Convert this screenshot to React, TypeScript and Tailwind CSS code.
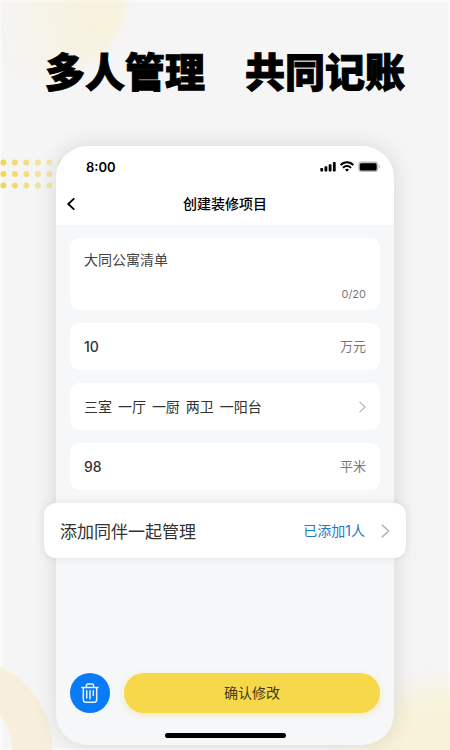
import { useState } from "react";

const ROOMS = ["三室", "一厅", "一厨", "两卫", "一阳台"];

export default function App() {
  return (
    <main className="relative isolate flex min-h-screen flex-col overflow-hidden bg-[#f5f5f5] px-14 pb-[5px] font-['Inter','Noto_Sans_CJK_SC',sans-serif] shadow-[inset_0_0_0_2px_#fafafa]">
      <Backdrop />
      <h1 className="-mx-10 py-[49px] text-center text-[40px] leading-[48px] font-black whitespace-pre text-black [-webkit-text-stroke:1px_black]">
        多人管理　共同记账
      </h1>
      <Phone />
    </main>
  );
}

function Phone() {
  return (
    <section className="flex flex-1 flex-col rounded-[32px] bg-[#f5f7f9] shadow-[0_0_24px_rgba(0,0,0,0.12)]">
      <header className="h-[79px] rounded-t-[32px] bg-white pt-3">
        <div className="flex items-center justify-between pr-[14px] pl-[30px] leading-[18px]">
          <span className="text-[13px] font-semibold text-black">8:00</span>
          <StatusIcons />
        </div>
        <div className="relative mt-[7px] flex h-[42px] items-center justify-center">
          <button type="button" aria-label="返回" className="absolute left-[10px] p-px text-black">
            <Chevron className="h-3 w-2 -scale-x-100" width={2} />
          </button>
          <h2 className="text-sm font-medium text-black">创建装修项目</h2>
        </div>
      </header>
      <ProjectForm />
    </section>
  );
}

function ProjectForm() {
  const [name, setName] = useState("大同公寓清单");

  return (
    <form className="flex flex-1 flex-col px-[14px] pt-[13px] pb-[7px]" onSubmit={(e) => e.preventDefault()}>
      <div className="flex flex-col gap-[13px]">
        <div className="rounded-[9px] bg-white px-[14px] pt-3 pb-2">
          <textarea
            aria-label="项目名称"
            value={name}
            onChange={(e) => setName(e.target.value)}
            className="block h-9 w-full resize-none text-sm leading-5 text-[#444] outline-none"
          />
          <p className="text-right text-[11px] leading-4 text-[#777]">0/20</p>
        </div>

        <NumberField label="预算" value="10" unit="万元" />

        <button type="button" className="flex h-[47px] items-center justify-between rounded-[9px] bg-white px-[14px] text-sm text-[#333]">
          <span>
            {ROOMS.map((room) => (
              <span key={room} className="mr-0.5">
                {room}{" "}
              </span>
            ))}
          </span>
          <Chevron className="h-3 w-[7px] text-[#b5b5b5]" width={1.3} />
        </button>

        <NumberField label="面积" value="98" unit="平米" />

        {/* Wider than the phone on both sides */}
        <button
          type="button"
          className="-mx-[26px] flex h-[55px] items-center rounded-xl bg-white px-4 leading-6 shadow-[0_0_10px_rgba(0,0,0,0.09)]"
        >
          <span className="font-['Noto_Sans_CJK_SC',sans-serif] text-[17px] text-[#333]">添加同伴一起管理</span>
          <span className="ml-auto text-sm leading-6 text-[#2079c7]">已添加1人</span>
          <Chevron className="ml-4 h-[14px] w-[9px] text-[#b5b5b5]" width={1.5} />
        </button>
      </div>

      <div className="mt-auto flex gap-[14px] pt-8">
        <button
          type="button"
          aria-label="删除"
          className="flex size-10 shrink-0 items-center justify-center rounded-full bg-[#0a7bf7] text-[#e4f3ff]"
        >
          <TrashIcon />
        </button>
        <button
          type="submit"
          className="h-10 flex-1 rounded-full bg-[#f7d84a] text-sm text-[#403a1c] shadow-[0_2px_6px_rgba(247,216,74,0.4)]"
        >
          确认修改
        </button>
      </div>
      <div className="mx-auto mt-5 h-[5px] w-[121px] rounded-full bg-black" />
    </form>
  );
}

function NumberField({ label, value, unit }: { label: string; value: string; unit: string }) {
  return (
    <label className="flex h-[47px] items-center rounded-[9px] bg-white px-[14px]">
      <input
        aria-label={label}
        defaultValue={value}
        inputMode="numeric"
        className="min-w-0 flex-1 text-sm font-medium text-[#333] outline-none"
      />
      <span className="text-[13px] text-[#777]">{unit}</span>
    </label>
  );
}

function Chevron({ className, width }: { className?: string; width: number }) {
  return (
    <svg className={className} viewBox="0 0 8 13" fill="none" aria-hidden>
      <path
        d="M1 1l6 5.5L1 12"
        stroke="currentColor"
        strokeWidth={width}
        strokeLinecap="round"
        strokeLinejoin="round"
      />
    </svg>
  );
}

function StatusIcons() {
  return (
    <svg width="60" height="12" viewBox="0 0 60 12" fill="none" aria-hidden>
      {/* Signal */}
      <g fill="#000">
        <rect x="0.3" y="7" width="2.8" height="3.6" rx="0.8" />
        <rect x="4.5" y="5.3" width="2.8" height="5.3" rx="0.8" />
        <rect x="8.7" y="3.2" width="2.8" height="7.4" rx="0.8" />
        <rect x="12.9" y="0.9" width="2.8" height="9.7" rx="0.8" />
      </g>
      {/* Wi-Fi */}
      <g stroke="#000" strokeWidth="2">
        <path d="M20.7 4.2a8.400 8.400 0 0 1 12.600 0" />
        <path d="M23 6.800a5.300 5.300 0 0 1 8 0" />
      </g>
      <path d="M25 8.600a3 3 0 0 1 4 0L27 10.800z" fill="#000" />
      {/* Battery */}
      <rect x="38.200" y="0.600" width="20" height="10.400" rx="3" fill="#bdbdbd" />
      <rect x="39.800" y="2.200" width="16.800" height="7.200" rx="1.500" fill="#000" />
      <path d="M58.700 4v3.600c.9-.3 1.300-1 1.300-1.800s-.4-1.500-1.300-1.800z" fill="#bdbdbd" />
    </svg>
  );
}

function TrashIcon() {
  return (
    <svg width="18" height="20" viewBox="0 0 18 20" fill="none" stroke="currentColor" aria-hidden>
      <path
        d="M.8 4.600h16.400M5.400 4.400V2.500q0-1.500 1.500-1.500h4.200q1.500 0 1.500 1.500v1.900"
        strokeWidth="1.500"
        strokeLinecap="round"
      />
      <path d="M2.300 4.800v12q0 2.400 2.400 2.400h8.600q2.400 0 2.400-2.400V4.800" strokeWidth="1.500" />
      <path d="M5.700 7.800v7.200M9 7.800v8M12.300 7.800v4.600" strokeWidth="1.500" strokeLinecap="round" />
    </svg>
  );
}

function Backdrop() {
  return (
    <div className="pointer-events-none absolute inset-0 -z-10" aria-hidden>
      <div className="absolute -top-24 -left-12 size-44 rounded-full bg-[radial-gradient(circle_at_85%_65%,rgba(249,241,208,0.7),rgba(249,241,208,0)_60%)] blur-[3px]" />
      <div className="absolute -right-20 -bottom-28 size-44 rounded-full bg-[#f8f2da] blur-md" />
      <svg className="absolute top-[158px] left-0" width="70" height="36" viewBox="0 0 70 36">
        {[0, 1, 2, 3, 4, 5].map((col) =>
          [0, 1, 2].map((row) => (
            <circle
              key={`${col}-${row}`}
              cx={3.4 + col * 11.5}
              cy={4.6 + row * 11.5}
              r="3"
              fill="#f2d44f"
              opacity={0.95 - col * 0.13}
            />
          )),
        )}
      </svg>
      <svg className="absolute bottom-0 left-0" width="60" height="90" viewBox="0 0 60 90">
        <circle cx="-36" cy="87" r="68" fill="none" stroke="#f7efdc" strokeWidth="40" />
      </svg>
    </div>
  );
}
